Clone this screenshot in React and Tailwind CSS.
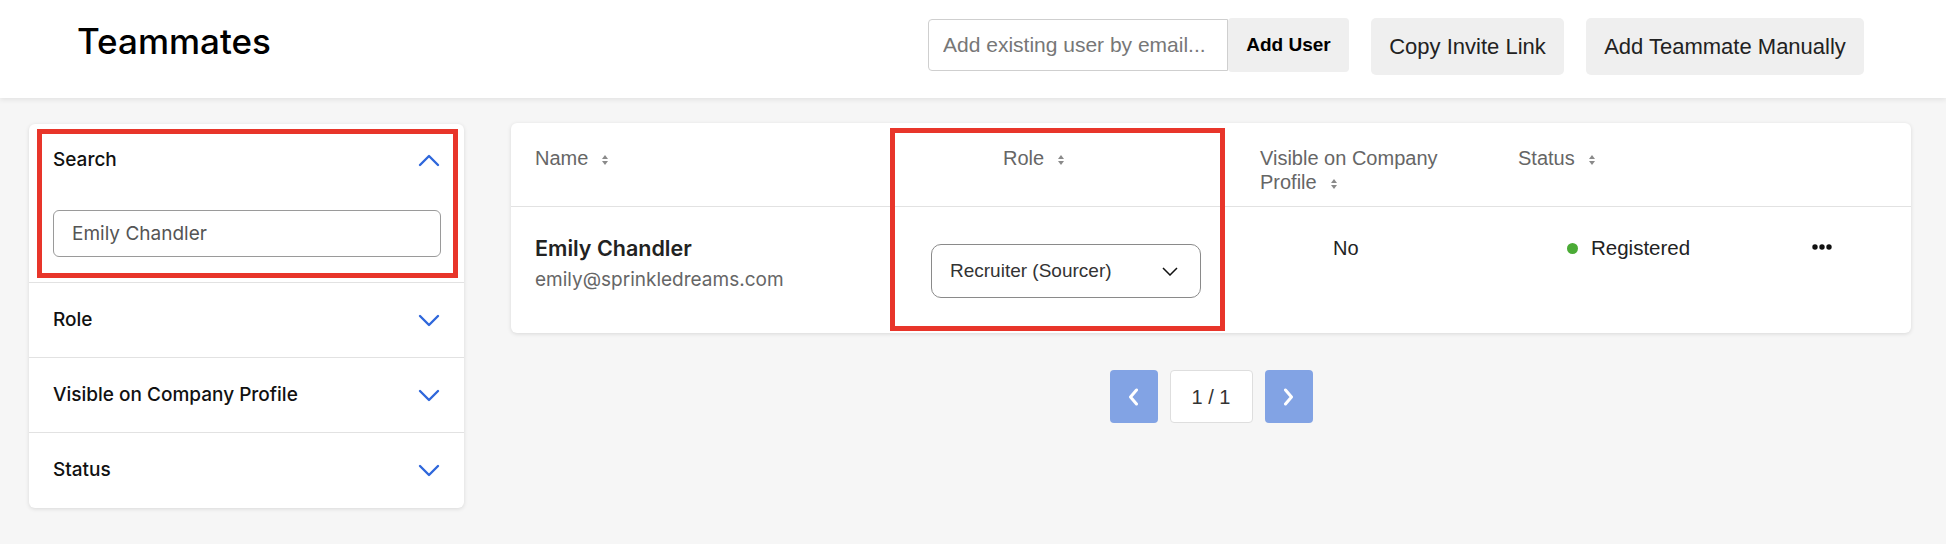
import React from 'react';

const SortIcon = () => (
  <svg className="inline-block ml-[14px] align-middle" width="6" height="10" viewBox="0 0 6 10" fill="#8a8a8a">
    <path d="M3 0 L6 4 L0 4 Z" />
    <path d="M3 10 L6 6 L0 6 Z" />
  </svg>
);

const Chevron = ({ up }) => (
  <svg width="22" height="13" viewBox="0 0 22 13" fill="none" stroke="#2f67db" strokeWidth="2.4" strokeLinecap="round" strokeLinejoin="round">
    <path d={up ? 'M2 11 L11 2 L20 11' : 'M2 2 L11 11 L20 2'} />
  </svg>
);

const filters = ['Role', 'Visible on Company Profile', 'Status'];

const App = () => {
  return (
    <div className="min-h-screen bg-[#f6f6f6] font-['Liberation_Sans',Arial,sans-serif]">
      <header className="h-[98px] bg-white shadow-[0_2px_5px_rgba(0,0,0,0.08)] flex justify-between pl-[77px] pr-[82px] relative z-10">
        <h1 className="mt-[21px] text-[35px] leading-[40px] font-medium text-black font-['Inter',sans-serif]">Teammates</h1>
        <div className="flex items-start gap-[22px] pt-[18px]">
          <div className="flex items-start">
            <input
              type="text"
              placeholder="Add existing user by email..."
              className="mt-[1px] h-[52px] w-[300px] border border-[#cfcfcf] rounded-l-[4px] px-[14px] text-[21px] text-[#222] placeholder:text-[#777] outline-none"
            />
            <button className="h-[54px] w-[121px] bg-[#efefef] rounded-[4px] text-[19px] font-semibold text-black">
              Add User
            </button>
          </div>
          <button className="h-[57px] w-[193px] bg-[#efefef] rounded-[5px] text-[22px] text-[#222]">
            Copy Invite Link
          </button>
          <button className="h-[57px] w-[278px] bg-[#efefef] rounded-[5px] text-[22px] text-[#222]">
            Add Teammate Manually
          </button>
        </div>
      </header>

      <main className="flex items-start pl-[29px] pr-[35px] pt-[25px] gap-[47px]">
        {/* filters */}
        <aside className="mt-[1px] w-[435px] shrink-0 bg-white rounded-[6px] shadow-[0_1px_4px_rgba(0,0,0,0.12)] font-['Inter',sans-serif]">
          <div className="h-[159px] border-b border-[#e2e2e2] pt-[5px] pl-[8px] pr-[6px]">
            <div className="h-[149px] border-[5px] border-[#e8352a] pl-[11px] pr-[13px]">
              <div className="h-[52px] flex items-center justify-between">
                <span className="text-[19px] font-medium text-[#111]">Search</span>
                <Chevron up />
              </div>
              <input
                type="text"
                defaultValue="Emily Chandler"
                className="mt-[24px] h-[47px] w-[388px] border border-[#9a9a9a] rounded-[6px] px-[18px] text-[19px] text-[#555] outline-none"
              />
            </div>
          </div>
          {filters.map((f, i) => (
            <div
              key={f}
              className={`h-[75px] px-[24px] flex items-center justify-between ${i < filters.length - 1 ? 'border-b border-[#e2e2e2]' : ''}`}
            >
              <span className="text-[19px] font-medium text-[#111]">{f}</span>
              <Chevron />
            </div>
          ))}
        </aside>

        {/* table */}
        <section className="flex-1 flex flex-col items-center">
          <div className="relative w-full bg-white rounded-[6px] shadow-[0_1px_4px_rgba(0,0,0,0.12)]">
            <div className="h-[84px] flex items-start pt-[23px] border-b border-[#e2e2e2] text-[20px] leading-[24px] text-[#666]">
              <div className="w-[379px] pl-[24px]">
                Name<SortIcon />
              </div>
              <div className="w-[334px] pl-[113px]">
                Role<SortIcon />
              </div>
              <div className="w-[270px] pl-[36px]">
                <div className="max-w-[200px]">
                  Visible on Company Profile<SortIcon />
                </div>
              </div>
              <div className="w-[290px] pl-[24px]">
                Status<SortIcon />
              </div>
            </div>
            <div className="h-[126px] flex items-start">
              <div className="w-[379px] pl-[24px] pt-[28px] font-['Inter',sans-serif]">
                <div className="text-[21.5px] leading-[26px] font-semibold text-[#222]">Emily Chandler</div>
                <div className="text-[19px] leading-[26px] text-[#666] mt-[6px]">emily@sprinkledreams.com</div>
              </div>
              <div className="w-[334px] pl-[41px] pt-[37px]">
                <div className="h-[54px] w-[270px] border border-[#8a8a8a] rounded-[10px] flex items-center justify-between pl-[18px] pr-[22px]">
                  <span className="text-[19px] text-[#333]">Recruiter (Sourcer)</span>
                  <svg width="16" height="9" viewBox="0 0 16 9" fill="none" stroke="#111" strokeWidth="1.5">
                    <path d="M1 1 L8 8 L15 1" />
                  </svg>
                </div>
              </div>
              <div className="w-[270px] pl-[109px] pt-[28px] text-[20px] leading-[26px] text-[#222]">No</div>
              <div className="w-[290px] pl-[73px] pt-[28px] flex items-center gap-[13px] text-[20.5px] leading-[26px] text-[#222]">
                <span className="w-[11px] h-[11px] rounded-full bg-[#4bab36]" />
                Registered
              </div>
              <div className="pl-[28px] pt-[37px]">
                <svg width="20" height="6" viewBox="0 0 20 6" fill="#111">
                  <circle cx="3" cy="3" r="2.7" />
                  <circle cx="10" cy="3" r="2.7" />
                  <circle cx="17" cy="3" r="2.7" />
                </svg>
              </div>
            </div>
            <div className="absolute left-[379px] top-[5px] w-[335px] h-[203px] border-[5px] border-[#e8352a] pointer-events-none" />
          </div>

          <div className="mt-[37px] flex gap-[12px]">
            <button className="h-[53px] w-[48px] rounded-[4px] bg-[#82a3e4] flex items-center justify-center">
              <svg width="11" height="18" viewBox="0 0 11 18" fill="none" stroke="#fff" strokeWidth="3" strokeLinecap="round" strokeLinejoin="round">
                <path d="M8.5 2 L2.5 9 L8.5 16" />
              </svg>
            </button>
            <div className="h-[53px] w-[83px] rounded-[4px] bg-white border border-[#dedede] flex items-center justify-center text-[20px] text-[#333]">
              1 / 1
            </div>
            <button className="h-[53px] w-[48px] rounded-[4px] bg-[#82a3e4] flex items-center justify-center">
              <svg width="11" height="18" viewBox="0 0 11 18" fill="none" stroke="#fff" strokeWidth="3" strokeLinecap="round" strokeLinejoin="round">
                <path d="M2.5 2 L8.5 9 L2.5 16" />
              </svg>
            </button>
          </div>
        </section>
      </main>
    </div>
  );
};

export default App;
